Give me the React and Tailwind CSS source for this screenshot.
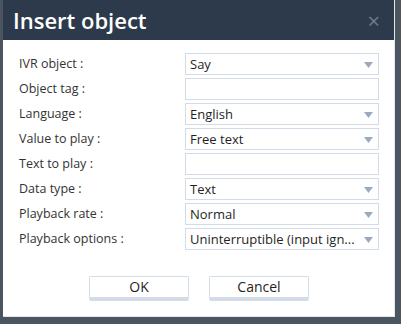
import React from 'react';

const rows = [
  { label: 'IVR object :', value: 'Say', select: true },
  { label: 'Object tag :', value: '', select: false },
  { label: 'Language :', value: 'English', select: true },
  { label: 'Value to play :', value: 'Free text', select: true },
  { label: 'Text to play :', value: '', select: false },
  { label: 'Data type :', value: 'Text', select: true },
  { label: 'Playback rate :', value: 'Normal', select: true },
  { label: 'Playback options :', value: 'Uninterruptible (input ign...', select: true },
];

function Field({ value, select }) {
  return (
    <div className="relative w-[194px] h-[22px] border border-[#d3dce6] bg-white flex items-center pl-[4px] text-[13px] text-[#1f1f1f]">
      <span className="leading-none">{value}</span>
      {select && (
        <svg className="absolute right-[5px] top-[8px]" width="9" height="6" viewBox="0 0 9 6">
          <path d="M0 0 H9 L4.5 6 Z" fill="#9aaac0" />
        </svg>
      )}
    </div>
  );
}

function Button({ children }) {
  return (
    <button className="w-[100px] h-[25px] bg-white border border-[#d5dde7] border-b-[4px] border-b-[#d3dbe6] rounded-[2px] text-[14px] text-[#1f1f1f] leading-none">
      {children}
    </button>
  );
}

export default function App() {
  return (
    <div
      className="w-[401px] h-[324px] bg-[#4b5560] pl-[3px] pr-[6px] pb-[7px]"
      style={{ fontFamily: '"Open Sans", "Noto Sans", sans-serif' }}
    >
      <div className="h-full bg-white flex flex-col border-r border-b border-[#e4e8ee]">
        <div className="h-[40px] bg-[#2c3a4b] flex items-center justify-between pl-[10px] pr-[14px]">
          <h1 className="text-white text-[22px] font-semibold leading-none">Insert object</h1>
          <span className="text-[#6f7b89] text-[22px] leading-none">×</span>
        </div>
        <div className="flex flex-col gap-[3px] pt-[13px] pl-[16px]">
          {rows.map((r) => (
            <div key={r.label} className="flex items-center h-[22px]">
              <div className="w-[166px] text-[12.5px] text-[#333] leading-none">{r.label}</div>
              <Field value={r.value} select={r.select} />
            </div>
          ))}
        </div>
        <div className="flex gap-[20px] pl-[86px] pt-[26px]">
          <Button>OK</Button>
          <Button>Cancel</Button>
        </div>
      </div>
    </div>
  );
}
